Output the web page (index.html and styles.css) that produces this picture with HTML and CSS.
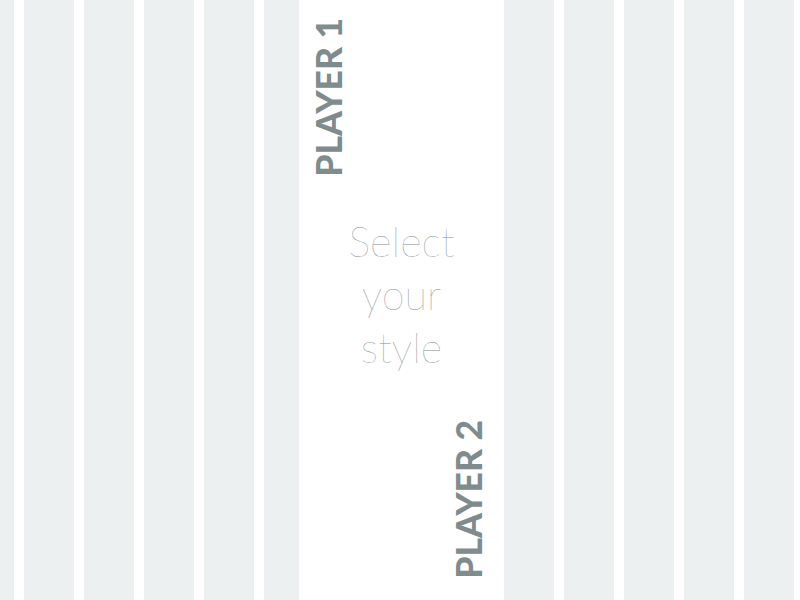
FILE: index.html
```html
<!DOCTYPE html>
<html>
<head>
<meta charset="utf-8">
<link rel="stylesheet" href="styles.css">
</head>
<body>
<main class="stage">
  <section class="panel">
    <div class="player player-one">PLAYER 1</div>
    <h1 class="title">Select your style</h1>
    <div class="player player-two">PLAYER 2</div>
  </section>
</main>
</body>
</html>
```

FILE: styles.css
```css
html, body {
  margin: 0;
  padding: 0;
  height: 100%;
  overflow: hidden;
}

body {
  background: #ffffff;
  font-family: Lato, "Open Sans", sans-serif;
}

.stage {
  height: 600px;
  background-image: repeating-linear-gradient(to right, #ecf0f1 0 50px, #ffffff 50px 60px);
  background-size: 60px 100%;
  background-position: 24px 0;
  display: flex;
}

.panel {
  margin-left: 299px;
  width: 205px;
  height: 600px;
  background: #ffffff;
  display: flex;
  flex-direction: column;
  box-sizing: border-box;
  padding: 18px 18px 21px 12px;
}

.player {
  writing-mode: vertical-rl;
  transform: rotate(180deg);
  font-size: 35.5px;
  font-weight: 900;
  line-height: 1;
  color: #7f8c8d;
}

.player-one {
  align-self: flex-start;
}

.player-two {
  align-self: flex-end;
  margin-top: auto;
}

.title {
  margin: 38px 0 0 6px;
  text-align: center;
  font-size: 41.5px;
  font-weight: 100;
  line-height: 53px;
  color: #7f8c8d;
  width: 120px;
  align-self: center;
}
```
